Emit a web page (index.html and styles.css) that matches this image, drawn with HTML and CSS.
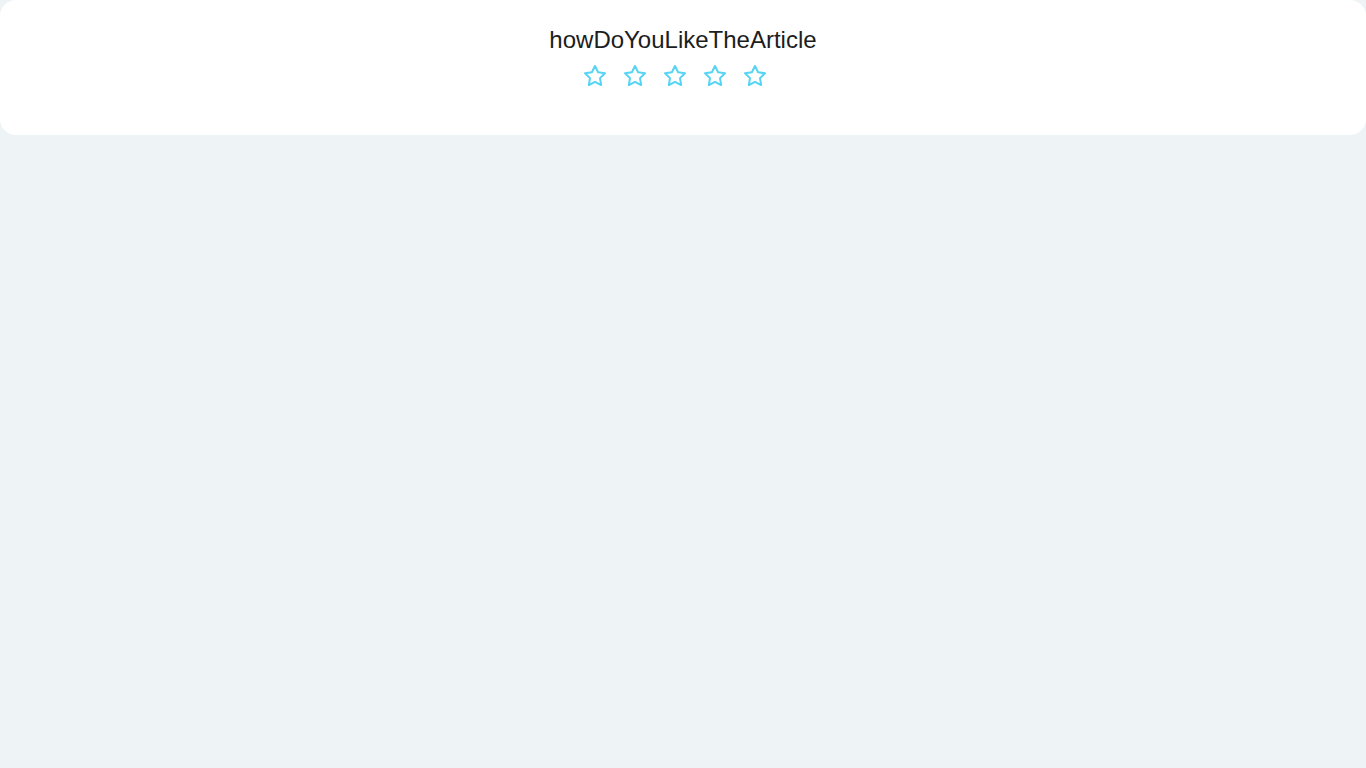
FILE: index.html
```html
<!DOCTYPE html>
<html>
<head>
<meta charset="utf-8">
<link rel="stylesheet" href="styles.css">
</head>
<body>
<div class="card">
  <h2 class="title">howDoYouLikeTheArticle</h2>
  <div class="stars">
    <svg class="star" viewBox="0 0 24 24"><polygon points="12 2 15.09 8.26 22 9.27 17 14.14 18.18 21.02 12 17.77 5.82 21.02 7 14.14 2 9.27 8.91 8.26 12 2"/></svg>
    <svg class="star" viewBox="0 0 24 24"><polygon points="12 2 15.09 8.26 22 9.27 17 14.14 18.18 21.02 12 17.77 5.82 21.02 7 14.14 2 9.27 8.91 8.26 12 2"/></svg>
    <svg class="star" viewBox="0 0 24 24"><polygon points="12 2 15.09 8.26 22 9.27 17 14.14 18.18 21.02 12 17.77 5.82 21.02 7 14.14 2 9.27 8.91 8.26 12 2"/></svg>
    <svg class="star" viewBox="0 0 24 24"><polygon points="12 2 15.09 8.26 22 9.27 17 14.14 18.18 21.02 12 17.77 5.82 21.02 7 14.14 2 9.27 8.91 8.26 12 2"/></svg>
    <svg class="star" viewBox="0 0 24 24"><polygon points="12 2 15.09 8.26 22 9.27 17 14.14 18.18 21.02 12 17.77 5.82 21.02 7 14.14 2 9.27 8.91 8.26 12 2"/></svg>
  </div>
</div>
</body>
</html>
```
FILE: styles.css
```css
html, body {
  margin: 0;
  padding: 0;
  background: #eef3f6;
  font-family: "Liberation Sans", Arial, sans-serif;
}
.card {
  background: #ffffff;
  border-radius: 16px;
  height: 135px;
  box-sizing: border-box;
  padding-top: 26px;
  display: flex;
  flex-direction: column;
  align-items: center;
}
.title {
  margin: 0;
  font-size: 24px;
  font-weight: 400;
  line-height: 28px;
  color: #1b1d21;
}
.stars {
  display: flex;
  margin-top: 10px;
}
.star {
  width: 24px;
  height: 24px;
  margin-right: 16px;
  fill: none;
  stroke: #55d4f4;
  stroke-width: 2;
  stroke-linejoin: round;
  stroke-linecap: round;
}
```
